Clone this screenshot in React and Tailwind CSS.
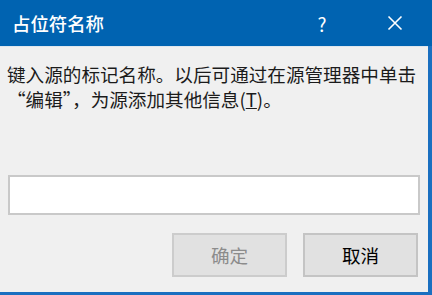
import React from "react";

const font = { fontFamily: '"Microsoft YaHei", "Noto Sans CJK SC", "Noto Sans", sans-serif' };

export default function App() {
  return (
    <div className="w-[432px] h-[295px] flex flex-col bg-[#1a6fc0] overflow-hidden" style={font}>
      <div className="h-[46px] shrink-0 flex items-center bg-[#0063b1] text-white pr-[4px]">
        <div className="pl-[12px] text-[18.4px] leading-none flex-1 font-medium">占位符名称</div>
        <div className="w-[46px] text-center text-[19px] leading-none mr-[27px]">?</div>
        <div className="w-[46px] flex justify-center mr-[10px]">
          <svg width="16" height="16" viewBox="0 0 16 16">
            <path d="M1.5 1.5 L14.5 14.5 M14.5 1.5 L1.5 14.5" stroke="white" strokeWidth="1.6" fill="none" />
          </svg>
        </div>
      </div>
      <div className="flex-1 flex flex-col bg-[#f0f0f0] mr-[4px] mb-[3px] border-t border-[#dde6ee]">
        <div className="pl-[7px] pt-[14px] text-[18.6px] leading-[25px] text-[#1b1b1b]">
          <div className="whitespace-nowrap">键入源的标记名称。以后可通过在源管理器中单击</div>
          <div className="whitespace-nowrap">“编辑”，为源添加其他信息(<span className="underline">T</span>)。</div>
        </div>
        <div className="mt-[64px] mx-[8px] h-[40px] bg-white border-2 border-[#c9c9c9]" />
        <div className="flex justify-end gap-[16px] mt-[18px] pr-[10px]">
          <div className="w-[115px] h-[44px] bg-[#e1e1e1] border-2 border-[#cccccc] flex items-center justify-center text-[18.6px] text-[#8c8c8c]">确定</div>
          <div className="w-[115px] h-[44px] bg-[#e1e1e1] border-2 border-[#c4c4c4] flex items-center justify-center text-[18.6px] text-black">取消</div>
        </div>
      </div>
    </div>
  );
}
